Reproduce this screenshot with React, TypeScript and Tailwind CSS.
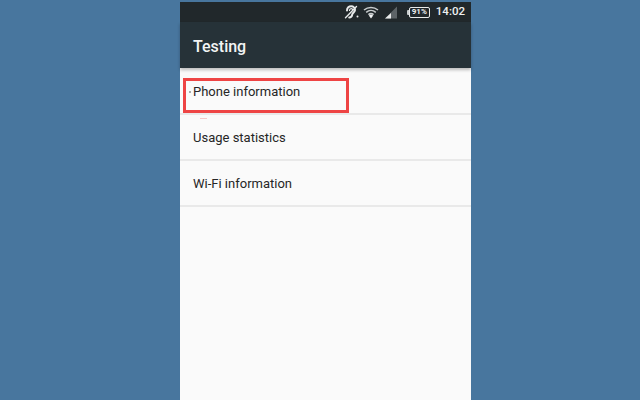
const rows = ["Phone information", "Usage statistics", "Wi-Fi information"];

const HearingIcon = () => (
  <svg width="16" height="14" viewBox="0 0 16 14" fill="none" stroke="#e8eaea" strokeWidth="2" strokeLinecap="round">
    <path d="M4 5.500C4 2.800 6 1.200 8.200 1.200S12 3 12 5c0 2.200-2.400 2.600-2.800 4.600C8.900 11.400 7.800 12.500 6.200 12.500" />
    <path d="M6.500 5.500C6.500 4.300 7.300 3.600 8.200 3.600S9.700 4.300 9.700 5.200" strokeWidth="1.200" />
    <path d="M13.500 1.500L2.500 12.800" strokeWidth="1.400" />
    <circle cx="14.500" cy="11.500" r="1" fill="#e8eaea" stroke="none" />
  </svg>
);

const WifiIcon = () => (
  <svg width="16" height="13" viewBox="0 0 16 13" fill="none" stroke="#c9cdce" strokeWidth="1.500">
    <path d="M1 4C5 .600 11 .600 15 4" />
    <path d="M3.200 6.400C6 4 10 4 12.800 6.400" />
    <path d="M5.400 8.600C7 7.400 9 7.400 10.600 8.600" />
    <path d="M5.800 9.600L8 8.400L10.200 9.600L8 12.600Z" fill="#f2f4f4" stroke="none" />
  </svg>
);

const SignalIcon = () => (
  <svg width="12" height="13" viewBox="0 0 12 13">
    <path d="M12 0.500V12.500H0Z" fill="#5d6467" />
    <path d="M6 7V12.500H0Z" fill="#e8eaea" />
  </svg>
);

const BatteryIcon = () => (
  <div className="flex items-center">
    <div className="h-[5px] w-[2px] rounded-l-[1px] bg-[#c9cdce]" />
    <div className="flex h-[11px] w-[21px] items-center justify-center rounded-[2px] border border-[#e8eaea] text-[8px] font-bold leading-none text-[#eef0f0]">
      91%
    </div>
  </div>
);

const App = () => {
  return (
    <div className="flex h-[400px] w-[640px] justify-center bg-[#48769e] pt-[2px] font-['Roboto','Liberation_Sans',sans-serif]">
      <div className="relative ml-[11px] flex h-[398px] w-[291px] flex-col bg-[#fafafa]">
        <div className="flex h-[20px] items-center justify-end bg-[#21282b] pr-[6px]">
          <HearingIcon />
          <div className="ml-[4px]">
            <WifiIcon />
          </div>
          <div className="ml-[6px]">
            <SignalIcon />
          </div>
          <div className="ml-[10px]">
            <BatteryIcon />
          </div>
          <span className="ml-[6px] text-[11.5px] font-medium leading-none text-[#eef0f0]">14:02</span>
        </div>
        <div className="flex h-[46px] items-center bg-[#263238] pl-[13px] pt-[3px] text-[16px] font-medium text-[#f2f4f4] shadow-[0_2px_3px_rgba(0,0,0,0.25)]">
          Testing
        </div>
        <ul className="mt-px">
          {rows.map(row => (
            <li
              key={row}
              className="flex h-[46px] items-center border-b-2 border-[#e9e9e9] pl-[13px] pt-[2px] text-[13px] text-[#262626]"
            >
              {row}
            </li>
          ))}
        </ul>
        <div className="absolute left-[3px] top-[76px] h-[35px] w-[166px] border-[3px] border-[#ee4444]" />
        <div className="absolute left-[9px] top-[89px] h-[2px] w-[2px] rounded-full bg-[#8a8f91]" />
        <div className="absolute left-[20px] top-[116px] h-px w-[7px] bg-[#f6c9c9]" />
      </div>
    </div>
  );
};

export default App;
